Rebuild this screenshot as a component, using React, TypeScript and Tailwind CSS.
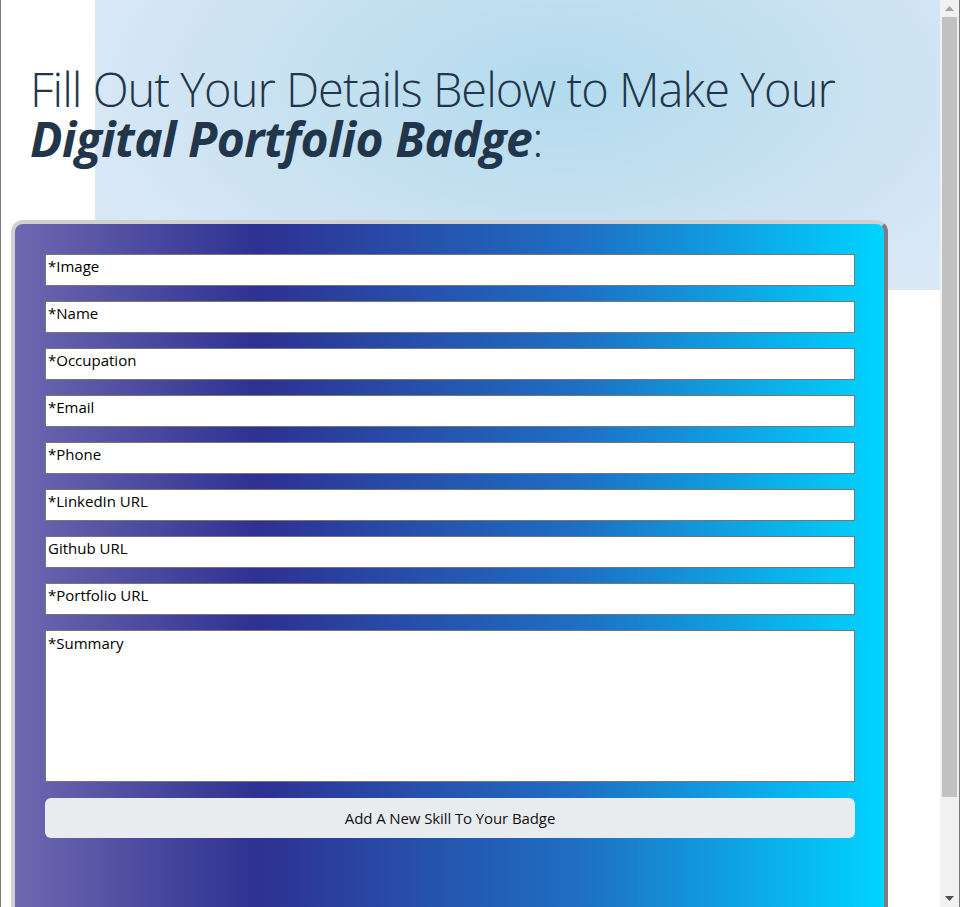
import React from "react";

const fields = [
  "*Image",
  "*Name",
  "*Occupation",
  "*Email",
  "*Phone",
  "*LinkedIn URL",
  "Github URL",
  "*Portfolio URL",
];

export default function App() {
  return (
    <div className="flex h-[907px] w-[960px] overflow-hidden bg-white" style={{ fontFamily: '"Open Sans", "Noto Sans", sans-serif' }}>
      <div className="w-px shrink-0 bg-[#7a7a7a]" />
      <div className="relative w-[939px] shrink-0">
        <div className="absolute left-[94px] top-0 h-[290px] right-0 bg-[radial-gradient(ellipse_60%_90%_at_55%_30%,#b2dbee_0%,#c4e0f0_45%,#dae8f6_100%)]" />
        <div className="relative">
          <h1 className="pl-[29px] pt-[64px] text-[47px] leading-[50px] text-[#22364b] font-light tracking-[-1px]">
            Fill Out Your Details Below to Make Your
            <br />
            <span className="text-[48px] font-bold italic tracking-[-0.5px]">Digital Portfolio Badge</span>:
          </h1>
          <div className="ml-[10px] mt-[56px] w-[877px] rounded-[12px] border-4 border-t-[#d0d0d0] border-l-[#d0d0d0] border-r-[#7d7d7d] border-b-[#7d7d7d] bg-[linear-gradient(90deg,#6e68b0_0%,#2e3192_28%,#1e6fc4_65%,#00d4ff_100%)] pl-[30px] pr-[29px] pt-[30px] pb-[120px]">
            <div className="flex flex-col gap-[15px]">
              {fields.map((f) => (
                <div key={f} className="h-[32px] border border-[#767676] bg-white px-[2px] pt-[1px] text-[15px] leading-[20px] text-black">
                  {f}
                </div>
              ))}
              <div className="h-[152px] border border-[#767676] bg-white px-[2px] pt-[2px] text-[15px] leading-[20px] text-black">
                *Summary
              </div>
            </div>
            <div className="mt-[16px] flex h-[40px] items-center justify-center rounded-[6px] bg-[#e9ecef] text-[15px] tracking-[-0.1px] text-[#111]">
              Add A New Skill To Your Badge
            </div>
          </div>
        </div>
      </div>
      <div className="flex w-[19px] shrink-0 flex-col bg-[#f1f1f1]">
        <div className="flex h-[17px] items-center justify-center">
          <svg width="9" height="5" viewBox="0 0 9 5"><path d="M4.5 0 L9 5 L0 5 Z" fill="#a3a3a3" /></svg>
        </div>
        <div className="mx-[2px] h-[780px] bg-[#c1c1c1]" />
        <div className="flex-1" />
        <div className="flex h-[17px] items-center justify-center">
          <svg width="9" height="5" viewBox="0 0 9 5"><path d="M0 0 L9 0 L4.5 5 Z" fill="#505050" /></svg>
        </div>
      </div>
      <div className="w-px shrink-0 bg-[#7a7a7a]" />
    </div>
  );
}
